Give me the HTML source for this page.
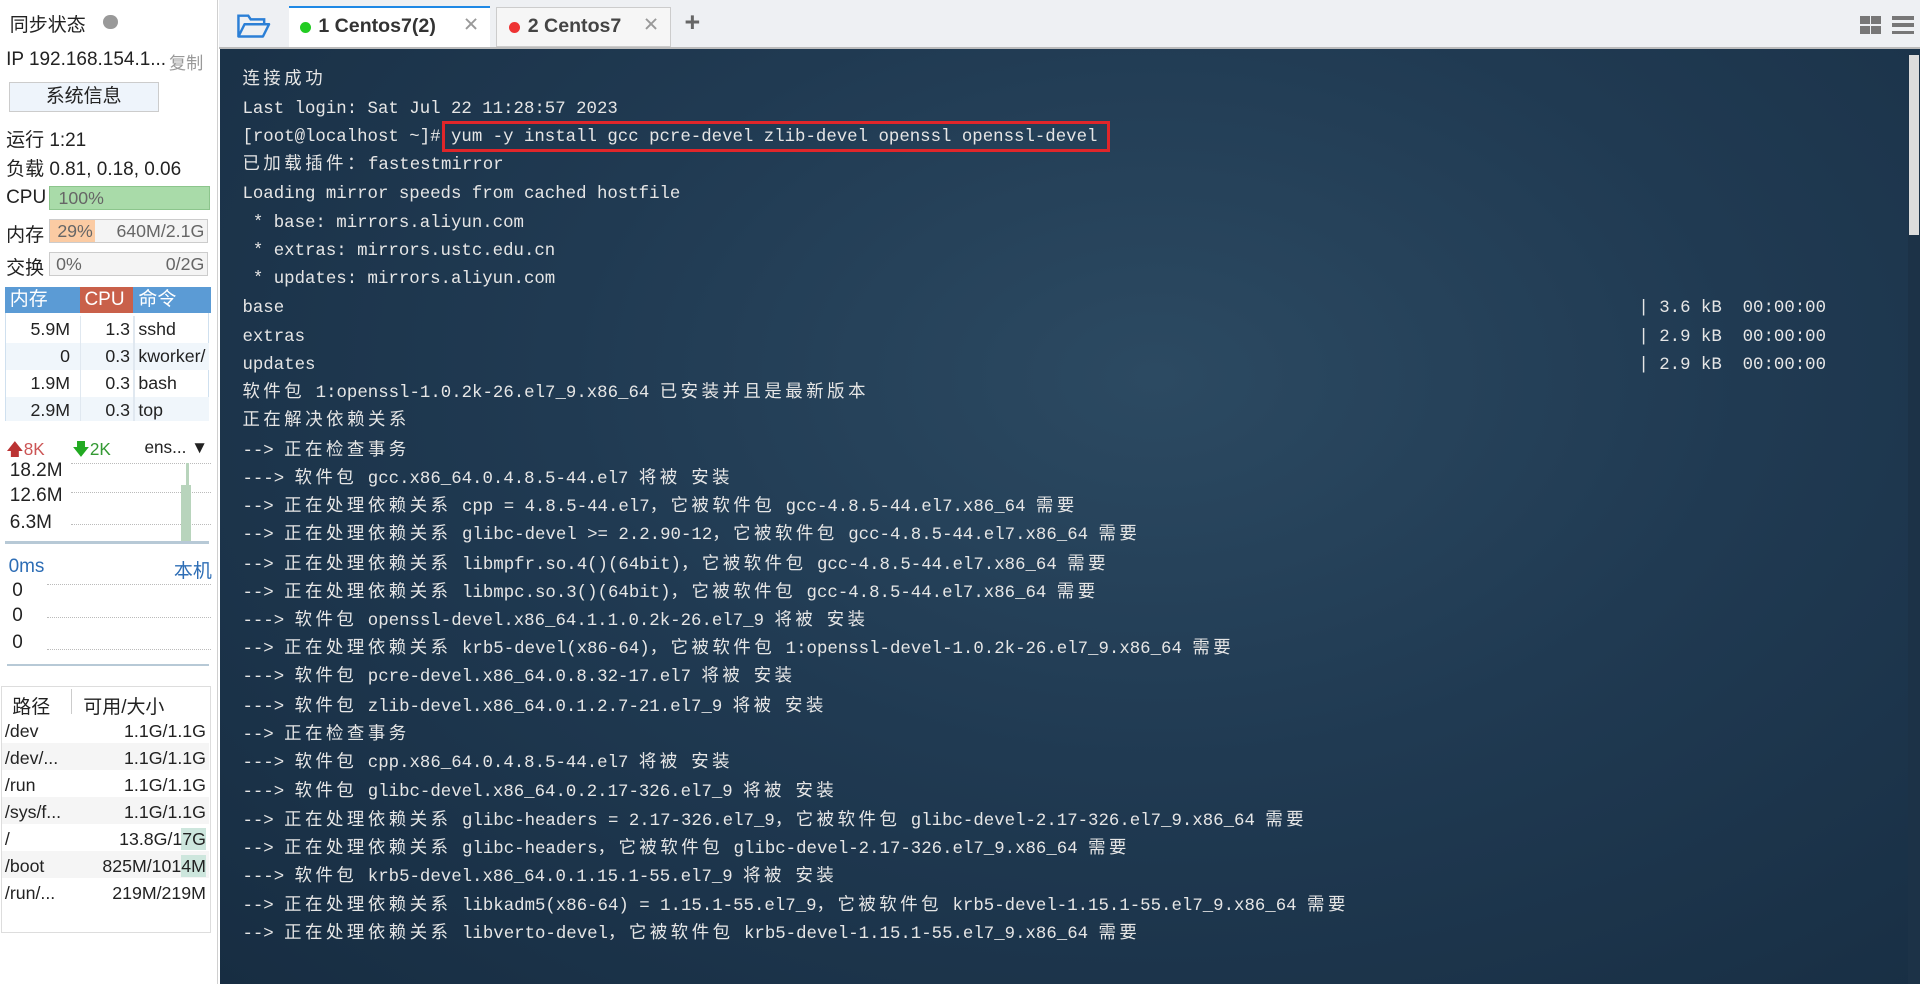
<!DOCTYPE html>
<html><head><meta charset="utf-8">
<style>
html,body{margin:0;padding:0;width:1920px;height:985px;overflow:hidden;background:#fff}
#w{position:absolute;left:0;top:0;width:1568px;height:804px;overflow:hidden;zoom:1.22449;font-family:"Liberation Sans","Noto Sans CJK SC",sans-serif;font-size:15.5px;color:#222}
.a{position:absolute;white-space:nowrap}
#left{position:absolute;left:0;top:0;width:178px;height:804px;background:#fff;border-right:1px solid #d0d0d0;box-sizing:border-box;overflow:hidden}
.bar{position:absolute;height:18px;border:1px solid #ccc;background:#f4f4f4;font-size:14.5px;color:#666;line-height:18px}
.tbl div{position:absolute;font-size:14.5px;white-space:nowrap;line-height:18px}
#tabs{position:absolute;left:179px;top:0;width:1389px;height:38px;background:#eef0f3;border-bottom:2px solid #bbb}
#term{position:absolute;left:180px;top:40px;width:1388px;height:765px;background:radial-gradient(ellipse at 55% 35%,#2c4a62 0%,#203a52 45%,#172d42 100%);overflow:hidden}
.l{position:absolute;left:18px;margin-top:3px;font-family:"Liberation Mono","Noto Sans CJK SC",monospace;font-size:14.2px;line-height:18px;height:18px;color:#e6e6e6;white-space:pre}
.c{letter-spacing:2.9px;line-height:18px}
</style></head><body><div id="w">
<div id="left">
<div class="a" style="left:8px;top:8px">同步状态</div>
<div class="a" style="left:84px;top:12px;width:12px;height:12px;border-radius:50%;background:#999"></div>
<div class="a" style="left:5px;top:40px">IP 192.168.154.1...</div>
<div class="a" style="left:138px;top:40px;color:#999;font-size:14px">复制</div>
<div class="a" style="left:7px;top:67px;width:121px;height:23px;background:#eef4fb;border:1px solid #ccc;text-align:center;line-height:23px">系统信息</div>
<div class="a" style="left:5px;top:102px">运行 1:21</div>
<div class="a" style="left:5px;top:126px">负载 0.81, 0.18, 0.06</div>
<div class="a" style="left:5px;top:153px">CPU</div>
<div class="bar" style="left:40px;top:152px;width:130px;background:#a9dba9;border-color:#8cc58c"><span style="margin-left:7px">100%</span></div>
<div class="a" style="left:5px;top:180px">内存</div>
<div class="bar" style="left:40px;top:179px;width:128px"><div style="position:absolute;left:0;top:0;width:37px;height:18px;background:#fbcba3"></div><span style="position:relative;margin-left:6px">29%</span><span style="position:absolute;right:2px">640M/2.1G</span></div>
<div class="a" style="left:5px;top:207px">交换</div>
<div class="bar" style="left:40px;top:206px;width:128px"><span style="margin-left:5px">0%</span><span style="position:absolute;right:2px">0/2G</span></div>
<div class="a" style="left:4px;top:234px;width:61px;height:22px;background:#5b9bd5;color:#fff;line-height:22px;padding-left:4px;box-sizing:border-box">内存</div>
<div class="a" style="left:65px;top:234px;width:44px;height:22px;background:#c9604a;color:#fff;line-height:22px;padding-left:4px;box-sizing:border-box">CPU</div>
<div class="a" style="left:109px;top:234px;width:63px;height:22px;background:#5b9bd5;color:#fff;line-height:22px;padding-left:4px;box-sizing:border-box">命令</div>
<div class="a" style="left:4px;top:256px;width:167px;height:88px;border:1px solid #cfe0ef;border-top:0;box-sizing:border-box"></div>
<div class="a" style="left:5px;top:280px;width:166px;height:22px;background:#f0f6fb"></div>
<div class="a" style="left:5px;top:324px;width:166px;height:20px;background:#f0f6fb"></div>
<div class="a" style="left:65px;top:258px;width:1px;height:86px;background:#e0e8f0"></div>
<div class="a" style="left:109px;top:258px;width:1px;height:86px;background:#e0e8f0"></div>
<div class="tbl">
<div style="right:120px;top:260px">5.9M</div><div style="right:71px;top:260px">1.3</div><div style="left:113px;top:260px">sshd</div>
<div style="right:120px;top:282px">0</div><div style="right:71px;top:282px">0.3</div><div style="left:113px;top:282px">kworker/</div>
<div style="right:120px;top:304px">1.9M</div><div style="right:71px;top:304px">0.3</div><div style="left:113px;top:304px">bash</div>
<div style="right:120px;top:326px">2.9M</div><div style="right:71px;top:326px">0.3</div><div style="left:113px;top:326px">top</div>
</div>
<div class="a" style="left:5px;top:357px;color:#b33;font-size:14px">🡅<span style="color:#c55">8K</span></div>
<div class="a" style="left:59px;top:357px;color:#2a2;font-size:14px">🡇<span style="color:#393">2K</span></div>
<div class="a" style="left:118px;top:357px;font-size:14px">ens... ▼</div>
<div class="a" style="left:58px;top:378px;width:114px;border-top:1px dotted #bbb"></div>
<div class="a" style="left:58px;top:402px;width:114px;border-top:1px dotted #bbb"></div>
<div class="a" style="left:58px;top:428px;width:114px;border-top:1px dotted #bbb"></div>
<div class="a" style="left:8px;top:376px">18.2M</div>
<div class="a" style="left:8px;top:396px">12.6M</div>
<div class="a" style="left:8px;top:418px">6.3M</div>
<div class="a" style="left:148px;top:396px;width:8px;height:47px;background:#b8d4bc"></div>
<div class="a" style="left:152px;top:378px;width:2px;height:20px;background:#b8d4bc"></div>
<div class="a" style="left:4px;top:442px;width:167px;height:2px;background:#b7c9d6"></div>
<div class="a" style="left:7px;top:454px;color:#2d6db5">0ms</div>
<div class="a" style="left:142px;top:454px;color:#2d6db5">本机</div>
<div class="a" style="left:38px;top:477px;width:134px;border-top:1px dotted #bbb"></div>
<div class="a" style="left:38px;top:504px;width:134px;border-top:1px dotted #bbb"></div>
<div class="a" style="left:38px;top:530px;width:134px;border-top:1px dotted #bbb"></div>
<div class="a" style="left:10px;top:474px">0</div>
<div class="a" style="left:10px;top:494px">0</div>
<div class="a" style="left:10px;top:516px">0</div>
<div class="a" style="left:6px;top:542px;width:165px;height:2px;background:#b7c9d6"></div>
<div class="a" style="left:1px;top:560px;width:171px;height:202px;border:1px solid #ddd;box-sizing:border-box"></div>
<div class="a" style="left:10px;top:565px">路径</div>
<div class="a" style="left:58px;top:563px;width:1px;height:20px;background:#ccc"></div>
<div class="a" style="left:68px;top:565px">可用/大小</div>
<div class="a" style="left:2px;top:607px;width:169px;height:22px;background:#f5f5f5"></div>
<div class="a" style="left:2px;top:651px;width:169px;height:22px;background:#f5f5f5"></div>
<div class="a" style="left:2px;top:695px;width:169px;height:22px;background:#f5f5f5"></div>
<div class="a" style="left:148px;top:676px;width:20px;height:18px;background:#cde6dd"></div>
<div class="a" style="left:148px;top:698px;width:20px;height:18px;background:#cde6dd"></div>
<div class="tbl">
<div style="left:4px;top:588px">/dev</div><div style="right:9px;top:588px">1.1G/1.1G</div>
<div style="left:4px;top:610px">/dev/...</div><div style="right:9px;top:610px">1.1G/1.1G</div>
<div style="left:4px;top:632px">/run</div><div style="right:9px;top:632px">1.1G/1.1G</div>
<div style="left:4px;top:654px">/sys/f...</div><div style="right:9px;top:654px">1.1G/1.1G</div>
<div style="left:4px;top:676px">/</div><div style="right:9px;top:676px">13.8G/17G</div>
<div style="left:4px;top:698px">/boot</div><div style="right:9px;top:698px">825M/1014M</div>
<div style="left:4px;top:720px">/run/...</div><div style="right:9px;top:720px">219M/219M</div>
</div>
</div>
<div id="tabs">
<svg class="a" style="left:14px;top:10px" width="28" height="22" viewBox="0 0 28 22"><path d="M2 20V3h8l2 3h11v4" fill="none" stroke="#2b7fd6" stroke-width="2"/><path d="M2 20l5-10h20l-5 10z" fill="none" stroke="#2b7fd6" stroke-width="2" stroke-linejoin="round"/></svg>
<div class="a" style="left:57px;top:5px;width:164px;height:33px;background:#fff;border-top:2px solid #1e88e5;box-sizing:border-box"></div>
<div class="a" style="left:66px;top:18px;width:9px;height:9px;border-radius:50%;background:#2c2"></div>
<div class="a" style="left:81px;top:12px;font-weight:bold;font-size:16px;color:#333">1 Centos7(2)</div>
<div class="a" style="left:199px;top:11px;color:#999;font-size:16px">✕</div>
<div class="a" style="left:226px;top:6px;width:143px;height:32px;background:#f6f6f6;border:1px solid #ccc;box-sizing:border-box"></div>
<div class="a" style="left:237px;top:18px;width:9px;height:9px;border-radius:50%;background:#e33"></div>
<div class="a" style="left:252px;top:12px;font-weight:bold;font-size:16px;color:#444">2 Centos7</div>
<div class="a" style="left:346px;top:11px;color:#999;font-size:16px">✕</div>
<div class="a" style="left:380px;top:6px;font-size:22px;font-weight:bold;color:#666">+</div>
<div class="a" style="left:1340px;top:13px;width:8px;height:7px;background:#777"></div>
<div class="a" style="left:1349px;top:13px;width:8px;height:7px;background:#777"></div>
<div class="a" style="left:1340px;top:21px;width:8px;height:7px;background:#777"></div>
<div class="a" style="left:1349px;top:21px;width:8px;height:7px;background:#777"></div>
<div class="a" style="left:1366px;top:13px;width:18px;height:3px;background:#777"></div>
<div class="a" style="left:1366px;top:19px;width:18px;height:3px;background:#777"></div>
<div class="a" style="left:1366px;top:25px;width:18px;height:3px;background:#777"></div>
</div>
<div id="term">
<div class="a" style="right:0;top:4px;width:10px;height:760px;background:#1c3247"></div>
<div class="a" style="right:1px;top:5px;width:8px;height:147px;background:#dcdcdc"></div>
<div class="a" style="left:181px;top:59px;width:541px;height:20px;border:3px solid #e0262a"></div>
<div class="l" style="top:14px">连接成功</div>
<div class="l" style="top:38px">Last login: Sat Jul 22 11:28:57 2023</div>
<div class="l" style="top:61px">[root@localhost ~]# yum -y install gcc pcre-devel zlib-devel openssl openssl-devel</div>
<div class="l" style="top:84px">已加载插件：fastestmirror</div>
<div class="l" style="top:107px">Loading mirror speeds from cached hostfile</div>
<div class="l" style="top:131px"> * base: mirrors.aliyun.com</div>
<div class="l" style="top:154px"> * extras: mirrors.ustc.edu.cn</div>
<div class="l" style="top:177px"> * updates: mirrors.aliyun.com</div>
<div class="l" style="top:200px">base</div>
<div class="l" style="top:224px">extras</div>
<div class="l" style="top:247px">updates</div>
<div class="l" style="left:1158px;top:200px">| 3.6 kB  00:00:00</div>
<div class="l" style="left:1158px;top:224px">| 2.9 kB  00:00:00</div>
<div class="l" style="left:1158px;top:247px">| 2.9 kB  00:00:00</div>
<div class="l" style="top:270px">软件包 1:openssl-1.0.2k-26.el7_9.x86_64 已安装并且是最新版本</div>
<div class="l" style="top:293px">正在解决依赖关系</div>
<div class="l" style="top:317px">--> 正在检查事务</div>
<div class="l" style="top:340px">---> 软件包 gcc.x86_64.0.4.8.5-44.el7 将被 安装</div>
<div class="l" style="top:363px">--> 正在处理依赖关系 cpp = 4.8.5-44.el7，它被软件包 gcc-4.8.5-44.el7.x86_64 需要</div>
<div class="l" style="top:386px">--> 正在处理依赖关系 glibc-devel >= 2.2.90-12，它被软件包 gcc-4.8.5-44.el7.x86_64 需要</div>
<div class="l" style="top:410px">--> 正在处理依赖关系 libmpfr.so.4()(64bit)，它被软件包 gcc-4.8.5-44.el7.x86_64 需要</div>
<div class="l" style="top:433px">--> 正在处理依赖关系 libmpc.so.3()(64bit)，它被软件包 gcc-4.8.5-44.el7.x86_64 需要</div>
<div class="l" style="top:456px">---> 软件包 openssl-devel.x86_64.1.1.0.2k-26.el7_9 将被 安装</div>
<div class="l" style="top:479px">--> 正在处理依赖关系 krb5-devel(x86-64)，它被软件包 1:openssl-devel-1.0.2k-26.el7_9.x86_64 需要</div>
<div class="l" style="top:502px">---> 软件包 pcre-devel.x86_64.0.8.32-17.el7 将被 安装</div>
<div class="l" style="top:526px">---> 软件包 zlib-devel.x86_64.0.1.2.7-21.el7_9 将被 安装</div>
<div class="l" style="top:549px">--> 正在检查事务</div>
<div class="l" style="top:572px">---> 软件包 cpp.x86_64.0.4.8.5-44.el7 将被 安装</div>
<div class="l" style="top:596px">---> 软件包 glibc-devel.x86_64.0.2.17-326.el7_9 将被 安装</div>
<div class="l" style="top:619px">--> 正在处理依赖关系 glibc-headers = 2.17-326.el7_9，它被软件包 glibc-devel-2.17-326.el7_9.x86_64 需要</div>
<div class="l" style="top:642px">--> 正在处理依赖关系 glibc-headers，它被软件包 glibc-devel-2.17-326.el7_9.x86_64 需要</div>
<div class="l" style="top:665px">---> 软件包 krb5-devel.x86_64.0.1.15.1-55.el7_9 将被 安装</div>
<div class="l" style="top:689px">--> 正在处理依赖关系 libkadm5(x86-64) = 1.15.1-55.el7_9，它被软件包 krb5-devel-1.15.1-55.el7_9.x86_64 需要</div>
<div class="l" style="top:712px">--> 正在处理依赖关系 libverto-devel，它被软件包 krb5-devel-1.15.1-55.el7_9.x86_64 需要</div>
</div>
</div>
<script>
document.querySelectorAll('.l').forEach(function(el){
  el.innerHTML = el.innerHTML.replace(/([\u3000-\u9fff\uff00-\uffef]+)/g,'<span class="c">$1</span>');
});
</script>
</body></html>
